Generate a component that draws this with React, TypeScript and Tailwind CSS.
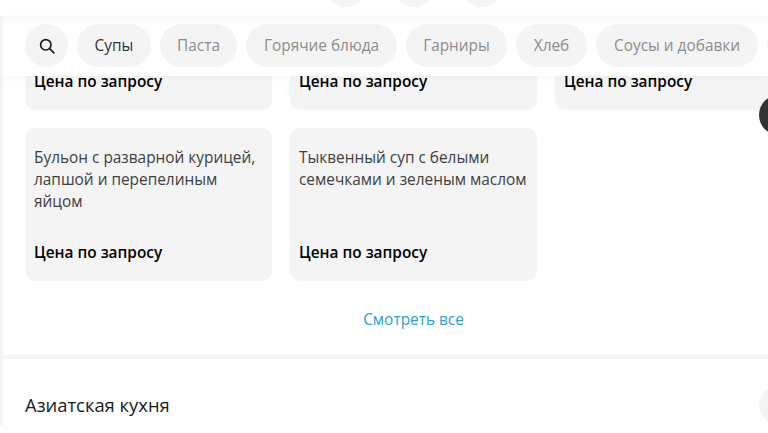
import React from "react";

const tabs = [
  { label: "Паста", width: "w-[77px]" },
  { label: "Горячие блюда", width: "w-[151px]" },
  { label: "Гарниры", width: "w-[101px]" },
  { label: "Хлеб", width: "w-[71px]" },
  { label: "Соусы и добавки", width: "w-[162px]" },
];

function Card({ text }: { text?: string }) {
  return (
    <div className="flex h-[153px] w-[247px] shrink-0 flex-col justify-between rounded-[10px] bg-[#f4f4f4] px-[9px] pt-[19px] pb-[17px]">
      <p className="text-[15.4px] leading-[22px] text-[#404040]">{text}</p>
      <p className="text-[15.4px] leading-[22px] font-semibold text-black">Цена по запросу</p>
    </div>
  );
}

function Circle() {
  return <div className="h-[40px] w-[40px] shrink-0 rounded-full bg-[#f4f4f4]" />;
}

export default function App() {
  return (
    <div className="relative h-[433px] w-[768px] overflow-hidden bg-white" style={{ fontFamily: '"Open Sans", "Noto Sans", sans-serif' }}>
      <div className="relative z-10 flex h-[16px] items-end justify-center gap-[28px] overflow-hidden bg-white pb-[9px] pl-[60px]">
        <Circle />
        <Circle />
        <Circle />
      </div>
      <div className="relative z-20 flex h-[60px] gap-[9px] overflow-hidden border-l-[3px] border-[#f4f4f4] bg-[linear-gradient(#f9f9f9,#ffffff_10px)] pt-[8px] pl-[22px] shadow-[0_2px_8px_rgba(0,0,0,0.03)]">
        <button className="flex h-[43px] w-[43px] shrink-0 items-center justify-center rounded-full bg-[#f4f4f4]">
          <svg width="16" height="16" viewBox="0 0 16 16" fill="none" stroke="#1a1a1a" strokeWidth="1.7" strokeLinecap="round">
            <circle cx="6.8" cy="6.8" r="5.2" />
            <path d="M10.7 10.7 14.8 14.8" />
          </svg>
        </button>
        <div className="flex h-[43px] w-[74px] shrink-0 items-center justify-center rounded-[22px] bg-[#f4f4f4] text-[15.4px] text-[#333]">Супы</div>
        {tabs.map((t) => (
          <div key={t.label} className={`flex h-[43px] shrink-0 items-center justify-center rounded-[22px] bg-[#f4f4f4] text-[15.4px] text-[#8c8c8c] ${t.width}`}>
            {t.label}
          </div>
        ))}
        <div className="h-[43px] w-[60px] shrink-0 rounded-[22px] bg-[#f4f4f4]" />
      </div>
      <div className="border-l-[3px] border-[#f4f4f4]">
        <div className="mt-[-119px] flex flex-col gap-[18px] pl-[22px]">
          <div className="flex gap-[18px]">
            <Card />
            <Card />
            <Card />
          </div>
          <div className="flex gap-[18px]">
            <Card text="Бульон с разварной курицей, лапшой и перепелиным яйцом" />
            <Card text="Тыквенный суп с белыми семечками и зеленым маслом" />
          </div>
        </div>
        <div className="mt-[28px] pl-[56px] text-center text-[15.4px] leading-[22px] text-[#2b9fd0]">Смотреть все</div>
        <div className="mt-[24px] ml-[-3px] h-[4px] bg-[#f4f4f4]" />
        <div className="flex items-center justify-between pt-[26px] pl-[22px]">
          <h2 className="text-[18.4px] leading-[40px] font-normal text-[#1a1a1a]">Азиатская кухня</h2>
          <div className="mr-[-31px]">
            <Circle />
          </div>
        </div>
      </div>
      <div className="absolute top-[95px] right-[-31px] h-[40px] w-[40px] rounded-full bg-[#333]" />
    </div>
  );
}
